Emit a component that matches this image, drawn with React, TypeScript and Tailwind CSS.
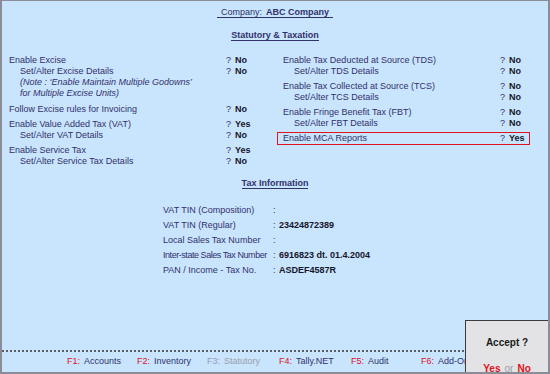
const leftGroups = [
  {
    gap: "",
    rows: [
      { label: "Enable Excise", value: "No" },
      { label: "Set/Alter Excise Details", value: "No", sub: true },
      { label: "(Note : ‘Enable Maintain Multiple Godowns’", note: true },
      { label: "for Multiple Excise Units)", note: true },
    ],
  },
  { gap: "mt-[5px]", rows: [{ label: "Follow Excise rules for Invoicing", value: "No" }] },
  {
    gap: "mt-[4px]",
    rows: [
      { label: "Enable Value Added Tax (VAT)", value: "Yes" },
      { label: "Set/Alter VAT Details", value: "No", sub: true },
    ],
  },
  {
    gap: "mt-[4px]",
    rows: [
      { label: "Enable Service Tax", value: "Yes" },
      { label: "Set/Alter Service Tax Details", value: "No", sub: true },
    ],
  },
]

const rightGroups = [
  {
    gap: "",
    rows: [
      { label: "Enable Tax Deducted at Source (TDS)", value: "No" },
      { label: "Set/Alter TDS Details", value: "No", sub: true },
    ],
  },
  {
    gap: "mt-[4px]",
    rows: [
      { label: "Enable Tax Collected at Source (TCS)", value: "No" },
      { label: "Set/Alter TCS Details", value: "No", sub: true },
    ],
  },
  {
    gap: "mt-[4px]",
    rows: [
      { label: "Enable Fringe Benefit Tax (FBT)", value: "No" },
      { label: "Set/Alter FBT Details", value: "No", sub: true },
    ],
  },
]

const taxInfo = [
  { label: "VAT TIN (Composition)", value: "" },
  { label: "VAT TIN (Regular)", value: "23424872389" },
  { label: "Local Sales Tax Number", value: "" },
  { label: "Inter-state Sales Tax Number", value: "6916823 dt. 01.4.2004", tight: true },
  { label: "PAN / Income - Tax No.", value: "ASDEF4587R" },
]

// F6 label runs under the Accept box, so it is clipped at the box edge
const footer = [
  { key: "F1:", label: "Accounts", w: "w-[70px]" },
  { key: "F2:", label: "Inventory", w: "w-[70px]" },
  { key: "F3:", label: "Statutory", w: "w-[72px]", off: true },
  { key: "F4:", label: "Tally.NET", w: "w-[72px]" },
  { key: "F5:", label: "Audit", w: "w-[70px]" },
  { key: "F6:", label: "Add-On Features", w: "w-[45px] overflow-hidden" },
]

type Row = { label: string; value?: string; sub?: boolean; note?: boolean }

function OptionRow({ row }: { row: Row }) {
  return (
    <div className="flex h-[11px] items-center leading-[11px]">
      <div
        className={`w-[217px] whitespace-nowrap ${row.sub || row.note ? "pl-[11px]" : ""} ${
          row.note ? "italic" : ""
        }`}
      >
        {row.label}
      </div>
      {row.value && (
        <>
          <div className="w-[9px]">?</div>
          <div className="font-bold text-[#15152a]">{row.value}</div>
        </>
      )}
    </div>
  )
}

export default function App() {
  return (
    <div
      className="relative flex h-[374px] w-[550px] flex-col overflow-hidden border-b-2 border-l-2 border-r-2 border-t border-[#8a8d97] bg-[#c9e4fd] text-[9px] text-[#31316a]"
      style={{ fontFamily: '"Liberation Sans", Arial, sans-serif' }}
    >
      <div className="flex-1">
        {/* header */}
        <div className="mt-[6px] flex justify-center">
          <div className="border-b border-[#33336b] px-[4px] leading-[10px]">
            Company:<span className="ml-[4px] font-bold">ABC Company</span>
          </div>
        </div>
        <div className="mt-[12px] flex justify-center">
          <div className="border-b border-[#33336b] font-bold leading-[10px]">Statutory &amp; Taxation</div>
        </div>

        {/* options */}
        <div className="mt-[14px] flex">
          <div className="ml-[7px] w-[274px]">
            {leftGroups.map((g, i) => (
              <div key={i} className={g.gap}>
                {g.rows.map((r) => (
                  <OptionRow key={r.label} row={r} />
                ))}
              </div>
            ))}
          </div>
          <div className="w-[260px]">
            {rightGroups.map((g, i) => (
              <div key={i} className={g.gap}>
                {g.rows.map((r) => (
                  <OptionRow key={r.label} row={r} />
                ))}
              </div>
            ))}
            <div className="-mx-[6px] mt-[3px] flex h-[13px] w-[253px] items-center border border-[#e0141e] pl-[5px] leading-[11px]">
              <div className="w-[217px]">Enable MCA Reports</div>
              <div className="w-[9px]">?</div>
              <div className="font-bold text-[#15152a]">Yes</div>
            </div>
          </div>
        </div>

        {/* tax information */}
        <div className="mt-[11px] flex justify-center">
          <div className="border-b border-[#33336b] font-bold leading-[10px]">Tax Information</div>
        </div>
        <div className="ml-[161px] mt-[14px]">
          {taxInfo.map((t) => (
            <div key={t.label} className="flex h-[15px] items-center">
              <div className={`w-[110px] whitespace-nowrap ${t.tight ? "tracking-[-0.45px]" : ""}`}>{t.label}</div>
              <div className="w-[6px]">:</div>
              <div className="font-bold text-[#15152a]">{t.value}</div>
            </div>
          ))}
        </div>
      </div>

      {/* footer */}
      <div className="flex h-[22px] items-center border-t-2 border-dotted border-[#5c5e68] pl-[65px]">
        {footer.map((f) => (
          <div key={f.key} className={`flex whitespace-nowrap ${f.w}`}>
            <span className={`w-[17px] shrink-0 ${f.off ? "text-[#9a9cab]" : "text-[#e0101c]"}`}>{f.key}</span>
            <span className={f.off ? "text-[#9a9cab]" : ""}>{f.label}</span>
          </div>
        ))}
      </div>

      {/* accept dialog */}
      <div className="absolute bottom-0 right-0 flex h-[52px] w-[83px] flex-col items-center border-l border-t border-[#3c3c3c] bg-[#e3e2e4] bg-[radial-gradient(#cbbccb_0.6px,transparent_0.7px)] bg-[length:4px_4px]">
        <div className="mt-[14px] text-[10px] font-bold text-[#1a1a1a]">Accept ?</div>
        <div className="mt-[11px] text-[10px]">
          <span className="font-bold text-[#e0101c]">Yes</span>
          <span className="mx-[4px] text-[#a0a0a8]">or</span>
          <span className="font-bold text-[#e0101c]">No</span>
        </div>
      </div>
    </div>
  )
}
